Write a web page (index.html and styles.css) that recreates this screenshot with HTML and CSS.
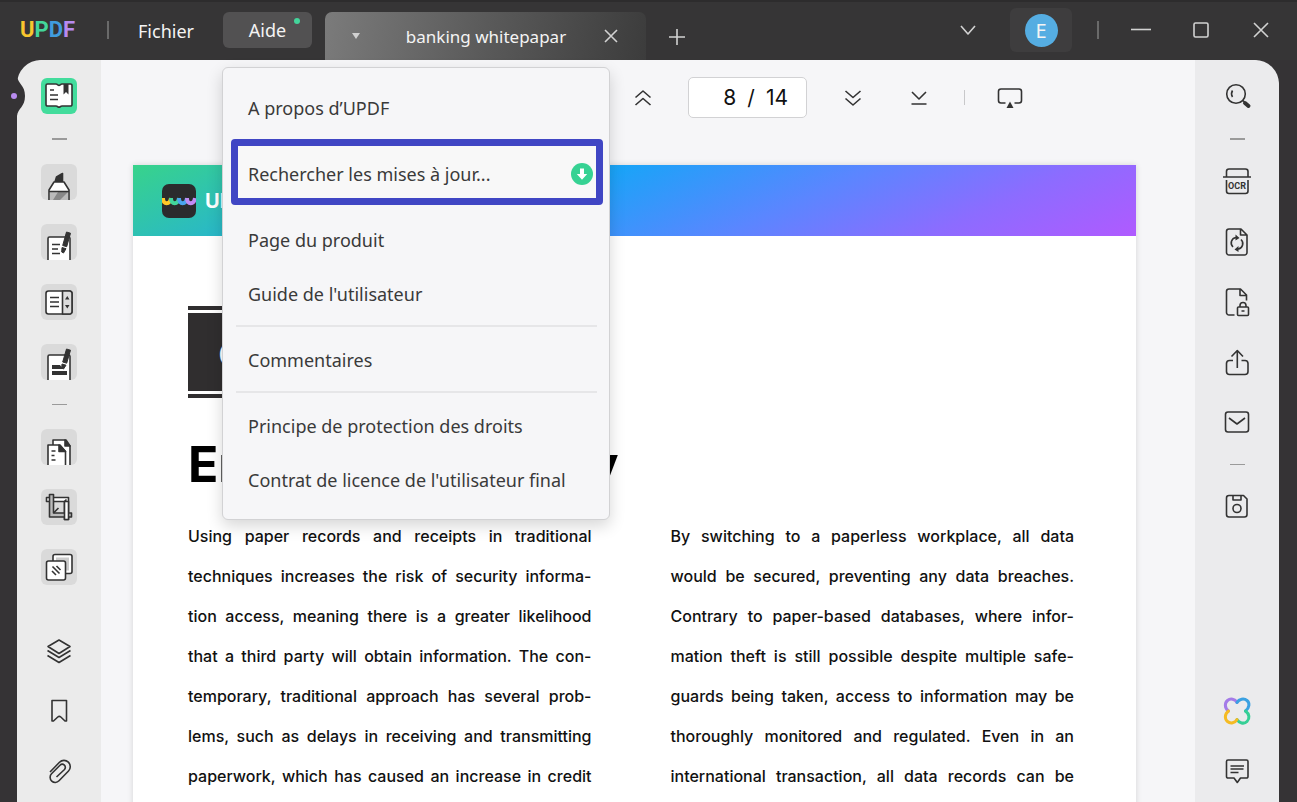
FILE: index.html
```html
<!DOCTYPE html>
<html lang="fr">
<head>
<meta charset="utf-8">
<meta name="viewport" content="width=device-width, initial-scale=1">
<title>UPDF - banking whitepapar</title>
<link rel="stylesheet" href="styles.css">
</head>
<body>
<div class="app">
  <header class="titlebar">
    <div class="logo"><span class="logo-u">U</span><span class="logo-p">P</span><span class="logo-d">D</span><span class="logo-f">F</span></div>
    <span class="bar-sep bar-sep-left"></span>
    <button class="menu-btn" type="button">Fichier</button>
    <div class="menu-anchor">
      <button class="menu-btn menu-btn-open" type="button" aria-expanded="true">Aide<span class="notice-dot"></span></button>
      <div class="menu" role="menu">
        <button class="menu-item" type="button" role="menuitem">A propos d’UPDF</button>
        <button class="menu-item menu-item-marked" type="button" role="menuitem">Rechercher les mises à jour...
          <svg width="22" height="22" viewBox="0 0 22 22" aria-hidden="true"><circle cx="11" cy="11" r="11" fill="#36d293"/><path d="M9 5.500h4V11h3.200L11 16.800 5.800 11H9z" fill="#fff"/></svg>
        </button>
        <button class="menu-item" type="button" role="menuitem">Page du produit</button>
        <button class="menu-item" type="button" role="menuitem">Guide de l'utilisateur</button>
        <hr class="menu-rule">
        <button class="menu-item" type="button" role="menuitem">Commentaires</button>
        <hr class="menu-rule">
        <button class="menu-item" type="button" role="menuitem">Principe de protection des droits</button>
        <button class="menu-item" type="button" role="menuitem">Contrat de licence de l'utilisateur final</button>
      </div>
    </div>
    <div class="tab">
      <svg width="8" height="6" viewBox="0 0 8 6" aria-hidden="true"><path d="M0 0h8L4 6z" fill="#d0d0d0"/></svg>
      <span class="tab-name">banking whitepapar</span>
      <button class="icon-btn tab-close" type="button" aria-label="Fermer l'onglet"><svg class="light" width="14" height="14" viewBox="0 0 14 14"><path d="M1 1l12 12M13 1L1 13"/></svg></button>
    </div>
    <button class="icon-btn new-tab" type="button" aria-label="Nouvel onglet"><svg class="light" width="18" height="18" viewBox="0 0 18 18"><path d="M9 1v16M1 9h16"/></svg></button>
    <div class="window-tools">
      <button class="icon-btn" type="button" aria-label="Liste des onglets"><svg class="light" width="16" height="10" viewBox="0 0 16 10"><path d="M1 1l7 8 7-8"/></svg></button>
      <button class="account" type="button"><span class="avatar">E</span></button>
      <span class="bar-sep"></span>
      <button class="icon-btn minimize" type="button" aria-label="Réduire"><svg class="light" width="22" height="16" viewBox="0 0 22 16"><path d="M1 7.500h20"/></svg></button>
      <button class="icon-btn maximize" type="button" aria-label="Agrandir"><svg class="light" width="16" height="16" viewBox="0 0 16 16"><rect x="1" y="1" width="14" height="14" rx="1.500"/></svg></button>
      <button class="icon-btn close" type="button" aria-label="Fermer"><svg class="light" width="16" height="16" viewBox="0 0 16 16"><path d="M1 1l14 14M15 1L1 15"/></svg></button>
    </div>
  </header>

  <div class="workspace">
    <svg class="notch" width="24" height="40" viewBox="0 0 24 40" aria-hidden="true"><path d="M15 0C16 8 23 9 23 20S16 32 15 40H0V0z" fill="#353335"/><circle cx="12" cy="20" r="3" fill="#b98cf0"/></svg>
    <nav class="rail rail-left" aria-label="Outils">
      <button class="tool tool-active" type="button" aria-label="Lecteur"><svg width="36" height="36" viewBox="0 0 36 36"><path d="M6.500 6h8.500c1.500 0 2 1.500 3 1.500S19.500 6 21 6h8.500a1.500 1.500 0 0 1 1.500 1.500v19a1.500 1.500 0 0 1-1.500 1.500H21c-1.500 0-2 1.300-3 1.300S16.500 28 15 28H6.500A1.500 1.500 0 0 1 5 26.500v-19A1.500 1.500 0 0 1 6.500 6z" fill="#fff"/><path d="M22.500 6h5v10.500L25 14l-2.500 2.500z" fill="#333" stroke="none"/><path d="M9 12h4M9 17h8M9 21.500h8"/></svg></button>
      <hr class="rail-rule rail-rule-thick">
      <button class="tool" type="button" aria-label="Surligner"><svg width="36" height="36" viewBox="0 0 36 36"><path d="M14 18l1.500-5L21.500 9.500v8.500z" fill="#333"/><path d="M13 18h10l5 8v12H8V26z" fill="#fff"/><path d="M9 28h18v8H9z" fill="#bbb" stroke="none"/><path d="M17 28h10L19 36h-7z" fill="#888" stroke="none"/><path d="M8 27.500h20"/></svg></button>
      <button class="tool" type="button" aria-label="Modifier"><svg width="36" height="36" viewBox="0 0 36 36"><path d="M7 38V14.500A1.500 1.500 0 0 1 8.500 13h19a1.500 1.500 0 0 1 1.500 1.500V38" fill="#fff"/><path d="M11 20.500h8M11 25h6M11 29.500h8"/><path d="M25.500 8l4 1.200-3.800 13.500-4-1.200z" fill="#333" stroke="#333" stroke-width="1"/><path d="M21 23.500l4 1.200-2.500 4.300-1.800-1z" fill="#333" stroke="#333" stroke-width="1"/></svg></button>
      <button class="tool" type="button" aria-label="Organiser"><svg width="36" height="36" viewBox="0 0 36 36"><rect x="5" y="7" width="26" height="23" rx="2.500" fill="#fff"/><path d="M21.500 7h7A2.500 2.500 0 0 1 31 9.500v18a2.500 2.500 0 0 1-2.500 2.500h-7z" fill="#ddd"/><path d="M9 13.500h9M9 18h9M9 22.500h9"/><path d="M24 15.500l2.300-3.500 2.200 3.500zM24 21l2.300 3.500 2.200-3.500z" fill="#333" stroke="none"/></svg></button>
      <button class="tool" type="button" aria-label="Remplir"><svg width="36" height="36" viewBox="0 0 36 36"><path d="M7 38V12.500A1.500 1.500 0 0 1 8.500 11h19a1.500 1.500 0 0 1 1.500 1.500V38" fill="#fff"/><path d="M11 21h8l3 4H11zM11 27h15v4H11z" fill="#333" stroke="none"/><path d="M25.500 5l4 1.200-3.800 13-4-1.200z" fill="#333" stroke="#333" stroke-width="1"/><path d="M21 20l4 1.200L22.500 25l-1.800-1z" fill="#333" stroke="#333" stroke-width="1"/></svg></button>
      <hr class="rail-rule">
      <button class="tool" type="button" aria-label="Pages"><svg width="36" height="36" viewBox="0 0 36 36"><path d="M12 38V11h13l4 6v21" fill="#fff"/><path d="M24 11l5 6h-5z" fill="#333"/><path d="M7 38V16h12l5.500 6.500V38" fill="#fff"/><path d="M18 16l6.500 6.500H18z" fill="#333"/><path d="M10.500 22h4M10.500 26.500h3M10.500 31h4"/></svg></button>
      <button class="tool" type="button" aria-label="Rogner"><svg width="36" height="36" viewBox="0 0 36 36"><path d="M5.500 8.500h22v22h-4V12.500h-18z" fill="#fff"/><path d="M8.500 5.500h4v18.500h18v4h-22z" fill="#bbb"/><path d="M23.500 12.500v18h4v-18z" fill="#fff"/><path d="M12.500 24l5-5M23.500 12.500l2-2"/></svg></button>
      <button class="tool" type="button" aria-label="Comparer"><svg width="36" height="36" viewBox="0 0 36 36"><rect x="12" y="5.500" width="19" height="19" rx="2" fill="#fff"/><path d="M15 8.500h13v13H15z" fill="#ccc" stroke="none"/><rect x="5.500" y="12" width="19" height="19" rx="2" fill="#fff"/><path d="M11 22l4 4M11.500 17.500l7 7M15.500 17l4 4"/></svg></button>
      <div class="rail-bottom">
        <button class="tool tool-plain" type="button" aria-label="Calques"><svg width="36" height="36" viewBox="0 0 36 36"><path d="M18 7l11 6.500L18 20.500 7 13.500zM6.500 17.500L18 24.500l11.500-7M6.500 22.500L18 29.500l11.500-7"/></svg></button>
        <button class="tool tool-plain" type="button" aria-label="Signets"><svg width="36" height="36" viewBox="0 0 36 36"><path d="M11 7.500h14.500v20.500h-1.500l-4.200-4q-1.500-1.300-3 0L12.500 28H11z"/></svg></button>
        <button class="tool tool-plain" type="button" aria-label="Pièces jointes"><svg width="36" height="36" viewBox="0 0 36 36"><path d="M9 19L18.500 9.300a6.200 6.200 0 0 1 9 8.700L18 27.800a5 5 0 0 1-7.500-7l8.500-8.600a3 3 0 0 1 4.500 4.300L15.500 24"/></svg></button>
      </div>
    </nav>

    <main class="viewer">
      <div class="toolbar">
        <button class="icon-btn" type="button" aria-label="Page précédente"><svg width="18" height="18" viewBox="0 0 18 18"><path d="M1.500 8.500L9 2l7.500 6.500M1.500 16L9 9.500l7.500 6.500"/></svg></button>
        <label class="pager"><input class="pager-input" type="text" value="8" aria-label="Page"><span class="pager-slash">/</span><span>14</span></label>
        <button class="icon-btn next" type="button" aria-label="Page suivante"><svg width="18" height="18" viewBox="0 0 18 18"><path d="M1.500 2L9 8.500 16.500 2M1.500 9.500L9 16l7.500-6.500"/></svg></button>
        <button class="icon-btn last" type="button" aria-label="Dernière page"><svg width="18" height="18" viewBox="0 0 18 18"><path d="M2 3l7 7 7-7M1.500 15h15"/></svg></button>
        <span class="toolbar-sep"></span>
        <button class="icon-btn" type="button" aria-label="Diaporama"><svg width="26" height="22" viewBox="0 0 26 22"><path d="M8.500 16H4a2.500 2.500 0 0 1-2.500-2.500v-9A2.500 2.500 0 0 1 4 2h18a2.500 2.500 0 0 1 2.500 2.500v9A2.500 2.500 0 0 1 22 16h-4.500"/><path d="M13 14.500l3.500 6.500h-7z" fill="#333" stroke="none"/></svg></button>
      </div>
      <article class="page">
        <div class="banner">
          <svg width="34" height="34" viewBox="0 0 34 34" aria-hidden="true"><rect width="34" height="34" rx="7" fill="#2b2b2d"/><g fill="none" stroke-width="4"><path d="M1 14c0 7 7 7 8 0" stroke="#ffc928"/><path d="M9 14c0 7 7 7 8 0" stroke="#42d69c"/><path d="M17 14c0 7 7 7 8 0" stroke="#4aa4ee"/><path d="M25 14c0 7 7 7 8 0" stroke="#c08cf5"/></g></svg>
          <span class="banner-name">UPDF</span>
        </div>
        <div class="chapter"><div class="chapter-label">C</div></div>
        <h1 class="heading">Enhance Security</h1>
        <div class="columns">
          <p class="column">
            <span class="line">Using paper records and receipts in traditional</span>
            <span class="line">techniques increases the risk of security informa-</span>
            <span class="line">tion access, meaning there is a greater likelihood</span>
            <span class="line">that a third party will obtain information. The con-</span>
            <span class="line">temporary, traditional approach has several prob-</span>
            <span class="line">lems, such as delays in receiving and transmitting</span>
            <span class="line">paperwork, which has caused an increase in credit</span>
          </p>
          <p class="column">
            <span class="line">By switching to a paperless workplace, all data</span>
            <span class="line">would be secured, preventing any data breaches.</span>
            <span class="line">Contrary to paper-based databases, where infor-</span>
            <span class="line">mation theft is still possible despite multiple safe-</span>
            <span class="line">guards being taken, access to information may be</span>
            <span class="line">thoroughly monitored and regulated. Even in an</span>
            <span class="line">international transaction, all data records can be</span>
          </p>
        </div>
      </article>
    </main>

    <nav class="rail rail-right" aria-label="Actions">
      <button class="tool tool-plain" type="button" aria-label="Rechercher"><svg width="36" height="36" viewBox="0 0 36 36"><circle cx="17" cy="16" r="9.300"/><path d="M13.500 12.500q-2 3.500 0 6.500M24 22.500l1.500 1.500"/><path d="M26 25l3.500 3" stroke-width="4" stroke-linecap="round"/></svg></button>
      <hr class="rail-rule rail-rule-thick">
      <button class="tool tool-plain" type="button" aria-label="OCR"><svg width="36" height="36" viewBox="0 0 36 36"><path d="M7.500 12.500V7.500a2.500 2.500 0 0 1 2.500-2.500h16.500A2.500 2.500 0 0 1 29 7.500v5M4 13h28M7.500 16v11a2.500 2.500 0 0 0 2.500 2.500h16.500A2.500 2.500 0 0 0 29 27V16"/><text class="ocr-text" x="18" y="25" text-anchor="middle">OCR</text></svg></button>
      <button class="tool tool-plain" type="button" aria-label="Convertir"><svg width="36" height="36" viewBox="0 0 36 36"><path d="M10 5h12l6 6v17.500a2.500 2.500 0 0 1-2.500 2.500H10a2.500 2.500 0 0 1-2.500-2.500v-21A2.500 2.500 0 0 1 10 5zM21.500 5v6h6.500"/><path d="M17 13.500a5.500 5.500 0 0 0-3 9.500M19 25a5.500 5.500 0 0 0 3-9.500"/><path d="M16.500 10.500v6l4-2.500zM19.500 22v6l-4-2.500z" fill="#333" stroke="none"/></svg></button>
      <button class="tool tool-plain" type="button" aria-label="Protéger"><svg width="36" height="36" viewBox="0 0 36 36"><path d="M15.500 31H10a2.500 2.500 0 0 1-2.500-2.500v-21A2.500 2.500 0 0 1 10 5h11.500l6 6v5.500M21 5v6.500h6.500"/><rect x="18.500" y="23" width="11" height="8.500" rx="1"/><path d="M21 23v-1.500a3 3 0 0 1 6 0V23M22.500 27h3"/></svg></button>
      <button class="tool tool-plain" type="button" aria-label="Partager"><svg width="36" height="36" viewBox="0 0 36 36"><path d="M14 16.500h-3.500a3 3 0 0 0-3 3v8a3 3 0 0 0 3 3H26a3 3 0 0 0 3-3v-8a3 3 0 0 0-3-3h-3.500M18.300 24V6.500M12.500 12.500l5.800-6 5.700 6"/></svg></button>
      <button class="tool tool-plain" type="button" aria-label="E-mail"><svg width="36" height="36" viewBox="0 0 36 36"><rect x="6.500" y="8" width="23" height="20" rx="2.500"/><path d="M10 14l8 6 8-6"/></svg></button>
      <hr class="rail-rule">
      <button class="tool tool-plain" type="button" aria-label="Enregistrer"><svg width="36" height="36" viewBox="0 0 36 36"><path d="M10 6.500h14.500L28 10v15.500a2.500 2.500 0 0 1-2.500 2.500H10a2.500 2.500 0 0 1-2.500-2.500V9A2.500 2.500 0 0 1 10 6.500zM14 6.500V11h8V6.500"/><circle cx="18" cy="19.500" r="4"/></svg></button>
      <div class="rail-bottom">
        <button class="tool tool-plain" type="button" aria-label="Assistant IA"><svg width="36" height="36" viewBox="0 0 36 36"><g stroke-width="3" stroke-linecap="round"><path d="M9.500 18C5.500 15 5.500 10 8.500 7.500S16 6 18 9.500" stroke="#a47be8"/><path d="M18 9.500C20 6 25 5 28 7.500s2.500 7.500-1.500 10.500" stroke="#3ba1e2"/><path d="M26.500 18c4 3 4.500 7.500 1.500 10.500s-8 1.500-10-2" stroke="#36cf96"/><path d="M18 26.500c-2 3.500-6.500 4.500-9.500 2S5.500 21 9.500 18" stroke="#f5bb24"/></g></svg></button>
        <button class="tool tool-plain" type="button" aria-label="Annotations"><svg width="36" height="36" viewBox="0 0 36 36"><path d="M9 7h18.500A1.500 1.500 0 0 1 29 8.500v15a1.500 1.500 0 0 1-1.500 1.500H21.500L18.300 29.500 15 25H9a1.500 1.500 0 0 1-1.500-1.500v-15A1.500 1.500 0 0 1 9 7zM11.500 13H25M11.500 16h13M11.500 19.500h8"/></svg></button>
      </div>
    </nav>
  </div>
</div>
</body>
</html>
```
FILE: styles.css
```css
* { box-sizing: border-box; }
body { margin: 0; background: #353335; font-family: "Noto Sans", "Open Sans", sans-serif; }
button { font: inherit; color: inherit; border: 0; background: none; padding: 0; cursor: pointer; }
svg { display: block; fill: none; stroke: #333; stroke-width: 1.6; stroke-linejoin: round; }
.light { stroke: #d2d2d2; }
circle[fill="#36d293"], .menu-item-marked path, .banner rect, .notch path, .notch circle, .tab path[fill] { stroke: none; }

.app { height: 100vh; display: flex; flex-direction: column; overflow: hidden; }

.titlebar { flex: none; height: 60px; display: flex; align-items: flex-start; padding: 0 28px 0 20px; border-top: 2px solid #2d2c2d; background: #363536; color: #f4f4f4; font-size: 18px; }
.logo { width: 57px; margin-top: 14px; font: 700 22px/28px Roboto, sans-serif; white-space: nowrap; }
.logo-u { color: #f8c62e; }
.logo-p { color: #43d59b; }
.logo-d { color: #409cdd; }
.logo-f { color: #b78af0; }
.bar-sep { width: 2px; height: 18px; margin-top: 19px; background: #6a6a6a; }
.bar-sep-left { margin-left: 30px; }
.menu-btn { position: relative; height: 36px; margin-top: 11px; }
.titlebar > .menu-btn { width: 106px; margin-left: 4px; }
.menu-anchor { position: relative; z-index: 2; margin-left: 4px; }
.menu-btn-open { width: 89px; margin-top: 10px; border-radius: 6px; background: #525152; }
.notice-dot { position: absolute; top: 6px; right: 12px; width: 6px; height: 6px; border-radius: 50%; background: #43d59b; }
.tab { display: flex; align-items: center; width: 321px; height: 48px; margin: 10px 0 0 13px; padding: 0 28px 0 27px; border-radius: 7px 7px 0 0; background: linear-gradient(100deg, #7b7b7b, #5a5a5a 50%, #3c3c3c); }
.tab-name { flex: 1; padding-left: 8px; font-size: 17px; text-align: center; }
.icon-btn { display: flex; align-items: center; justify-content: center; }
.new-tab { margin: 26px 0 0 22px; }
.window-tools { display: flex; margin-left: auto; }
.window-tools .icon-btn { height: 56px; }
.account { display: flex; align-items: center; justify-content: center; width: 62px; height: 44px; margin: 6px 25px 0 34px; border-radius: 6px; background: #3e3d3e; }
.avatar { width: 33px; height: 33px; border-radius: 50%; background: #55ade2; font-size: 20px; line-height: 34px; }
.minimize { margin-left: 31px; }
.maximize { margin-left: 41px; }
.close { margin-left: 44px; }

.menu { position: absolute; top: 65px; left: -1px; width: 388px; padding: 13px 6px 12px 8px; border: 1px solid #d2d2d4; border-radius: 6px; background: #f6f6f8; color: #3a3a3a; box-shadow: 0 6px 16px rgba(0, 0, 0, 0.16); }
.menu-item { display: flex; align-items: center; justify-content: space-between; width: 100%; height: 54px; padding: 0 17px; white-space: nowrap; }
.menu-item-marked { height: 66px; margin: 4px 0 8px; padding: 4px 3px 0 10px; border: 7px solid #4046c4; border-radius: 4px; background: #f8f8f8; }
.menu-rule { height: 2px; margin: 4px 6px 6px 5px; border: 0; background: #e6e6e8; }

.workspace { position: relative; flex: 1; min-height: 0; display: flex; margin: 0 18px 0 17px; border-radius: 28px 28px 0 0; background: #f6f6f8; }
.notch { position: absolute; left: -15px; top: 16px; }
.rail { flex: none; width: 84px; display: flex; flex-direction: column; align-items: center; gap: 24px; padding: 18px 0 13px; background: #ebebeb; }
.rail-left { border-top-left-radius: 24px; }
.rail-right { border-top-right-radius: 24px; background: #ebebed; }
.rail-rule { flex: none; width: 15px; height: 1px; margin: 0; border: 0; background: #9a9a9a; }
.rail-rule-thick { height: 2px; }
.tool { flex: none; width: 36px; height: 36px; border-radius: 6px; background: #dadada; overflow: hidden; }
.tool-active { background: #43dc9c; }
.tool-plain { background: none; }
.rail-bottom { display: flex; flex-direction: column; gap: 24px; margin-top: auto; }
.ocr-text { font: 700 9px Roboto, sans-serif; fill: #333; stroke: none; }

.viewer { flex: 1; min-width: 0; overflow: hidden; padding: 0 59px 0 32px; }
.toolbar { display: flex; align-items: center; justify-content: flex-end; height: 75px; padding-right: 113px; }
.pager { display: flex; align-items: center; gap: 11px; width: 119px; height: 41px; margin: 0 37px 0 36px; padding-right: 18px; border: 1px solid #d2d2d4; border-radius: 5px; background: #fff; color: #111; font: 21px Inter, sans-serif; }
.pager-input { flex: 1; min-width: 0; padding: 0; border: 0; background: none; font: inherit; color: inherit; text-align: right; outline: 0; }
.last { margin-left: 48px; }
.toolbar-sep { width: 1px; height: 15px; margin: 0 32px 0 36px; background: #c8c8ca; }

.page { min-height: 700px; margin-top: 30px; padding-bottom: 40px; background: #fff; box-shadow: 0 0 6px rgba(0, 0, 0, 0.14); color: #111; font-family: Inter, sans-serif; }
.banner { display: flex; align-items: center; gap: 9px; height: 71px; padding-left: 29px; background: linear-gradient(155deg, #38d38b, #27b4d0 23%, #1ba3f8 43%, #5a86ff 64%, #8c6cff 82%, #b05aff); }
.banner-name { color: #fff; font-size: 20px; font-weight: 700; }
.chapter { width: 300px; margin: 70px 0 0 55px; padding: 3px 0; border: solid #302e2f; border-width: 4px 0; }
.chapter-label { height: 78px; padding-left: 30px; background: #302e2f; color: #fff; font-size: 34px; line-height: 84px; }
.heading { margin: 36px 0 0 55px; color: #000; font-size: 50px; line-height: 60px; font-weight: 700; white-space: nowrap; }
.columns { display: grid; grid-template-columns: minmax(0, 1fr) minmax(0, 1fr); gap: 79px; margin: 22px 62px 0 55px; }
.column { margin: 0; font-size: 16px; font-weight: 500; line-height: 40px; }
.line { display: block; text-align: justify; text-align-last: justify; white-space: nowrap; }
```
